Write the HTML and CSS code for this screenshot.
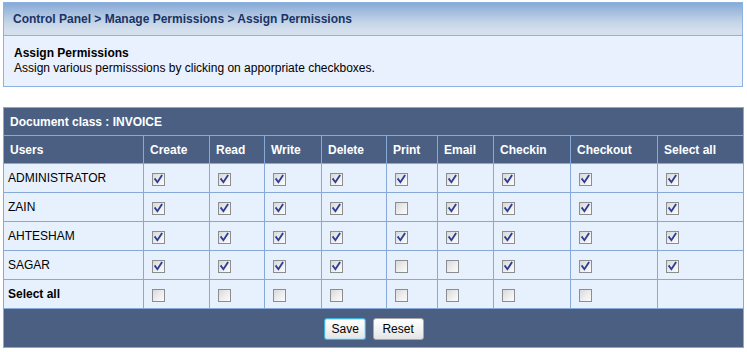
FILE: index.html
```html
<!DOCTYPE html>
<html>
<head>
<meta charset="utf-8">
<link rel="stylesheet" href="styles.css">
</head>
<body>
<div class="page">
  <div class="panel">
    <div class="crumbs">Control Panel &gt; Manage Permissions &gt; Assign Permissions</div>
    <div class="intro">
      <div class="intro-title">Assign Permissions</div>
      <div class="intro-text">Assign various permisssions by clicking on apporpriate checkboxes.</div>
    </div>
  </div>

  <table class="perm">
    <colgroup>
      <col class="c-user"><col class="c-create"><col class="c-read"><col class="c-write"><col class="c-delete"><col class="c-print"><col class="c-email"><col class="c-checkin"><col class="c-checkout"><col class="c-all">
    </colgroup>
    <thead>
      <tr class="doc"><th colspan="10">Document class : INVOICE</th></tr>
      <tr class="hdr">
        <th>Users</th><th>Create</th><th>Read</th><th>Write</th><th>Delete</th><th>Print</th><th>Email</th><th>Checkin</th><th>Checkout</th><th>Select all</th>
      </tr>
    </thead>
    <tbody id="rows"></tbody>
    <tfoot>
      <tr class="foot">
        <td colspan="10">
          <div class="btns">
            <button class="btn btn-save" type="button">Save</button>
            <button class="btn" type="button">Reset</button>
          </div>
        </td>
      </tr>
    </tfoot>
  </table>
</div>
<script>
  var data = [
    ["ADMINISTRATOR", [1,1,1,1,1,1,1,1,1]],
    ["ZAIN", [1,1,1,1,0,1,1,1,1]],
    ["AHTESHAM", [1,1,1,1,1,1,1,1,1]],
    ["SAGAR", [1,1,1,1,0,0,1,1,1]],
    ["Select all", [0,0,0,0,0,0,0,0,null]]
  ];
  var check = '<svg width="13" height="13" viewBox="0 0 13 13"><path d="M3.2 6.2 L5.4 9.2 L9.6 2.8" fill="none" stroke="#2d3f93" stroke-width="1.9" stroke-linecap="square" stroke-linejoin="miter"/></svg>';
  var tb = document.getElementById("rows");
  data.forEach(function (r, i) {
    var tr = document.createElement("tr");
    var html = '<td class="name' + (i === 4 ? ' bold' : '') + '">' + r[0] + '</td>';
    r[1].forEach(function (v) {
      if (v === null) { html += '<td></td>'; return; }
      html += '<td><span class="cb">' + (v ? check : '') + '</span></td>';
    });
    tr.innerHTML = html;
    tb.appendChild(tr);
  });
</script>
</body>
</html>
```

FILE: styles.css
```css
html, body {
  margin: 0;
  padding: 0;
  background: #ffffff;
}

body {
  font-family: "Liberation Sans", Arial, sans-serif;
  font-size: 12px;
  color: #000;
}

.page {
  padding: 2px 4px 0 3px;
  width: 740px;
}

.panel {
  border: 1px solid #8db1e0;
  background: #e8f1fd;
}

.crumbs {
  height: 32px;
  line-height: 32px;
  padding-left: 9px;
  font-weight: bold;
  color: #1a3366;
  background: linear-gradient(to bottom, #87aad7 0%, #a6bfdf 30%, #c4d4e7 60%, #d3dfec 85%, #d6e1ed 100%);
  border-bottom: 1px solid #8db1e0;
}

.intro {
  padding: 9px 10px 8px 10px;
  height: 33px;
}

.intro-title {
  font-weight: bold;
  line-height: 16px;
}

.intro-text {
  line-height: 15px;
}

.perm {
  margin-top: 20px;
  width: 740px;
  border-collapse: collapse;
  table-layout: fixed;
  border: 1px solid #86a9d8;
}

.c-user { width: 140px; }
.c-create { width: 66px; }
.c-read { width: 55px; }
.c-write { width: 57px; }
.c-delete { width: 65px; }
.c-print { width: 51px; }
.c-email { width: 56px; }
.c-checkin { width: 77px; }
.c-checkout { width: 87px; }
.c-all { width: 86px; }

.perm th {
  background: #4a5f82;
  color: #ffffff;
  font-weight: bold;
  text-align: left;
  padding: 0 0 0 6px;
  border: 1px solid #86a9d8;
}

.doc th {
  height: 27px;
  border-bottom: 1px solid #86a9d8;
}

.hdr th {
  height: 27px;
}

.perm td {
  background: #e7f1fd;
  border: 1px solid #86a9d8;
  height: 28px;
  padding: 0 0 0 8px;
  vertical-align: middle;
}

.perm td.name {
  padding-left: 4px;
}

.perm td.bold {
  font-weight: bold;
}

.cb {
  display: block;
  width: 11px;
  height: 11px;
  border: 1px solid #8c8d8e;
  background: linear-gradient(135deg, #d8d9da 0%, #eeeeef 55%, #fbfbfb 100%);
  position: relative;
  top: 1px;
}

.cb svg {
  position: absolute;
  left: -1px;
  top: -1px;
}

.perm .foot td {
  background: #4a5f82;
  height: 38px;
  padding: 0;
  text-align: center;
}

.btns {
  display: flex;
  justify-content: center;
  gap: 7px;
  padding-top: 1px;
}

.btn {
  font-family: "Liberation Sans", Arial, sans-serif;
  font-size: 12px;
  height: 22px;
  padding: 0 7px;
  color: #000;
  background: linear-gradient(to bottom, #ffffff 0%, #f3f3f3 50%, #e4e4e4 100%);
  border: 1px solid #a7a7a7;
  border-radius: 3px;
}

.btn-save {
  width: 42px;
  border-color: #3fb1de;
  box-shadow: inset 0 0 0 1px #bfe6f6;
}

.btn:not(.btn-save) {
  width: 51px;
}
```
